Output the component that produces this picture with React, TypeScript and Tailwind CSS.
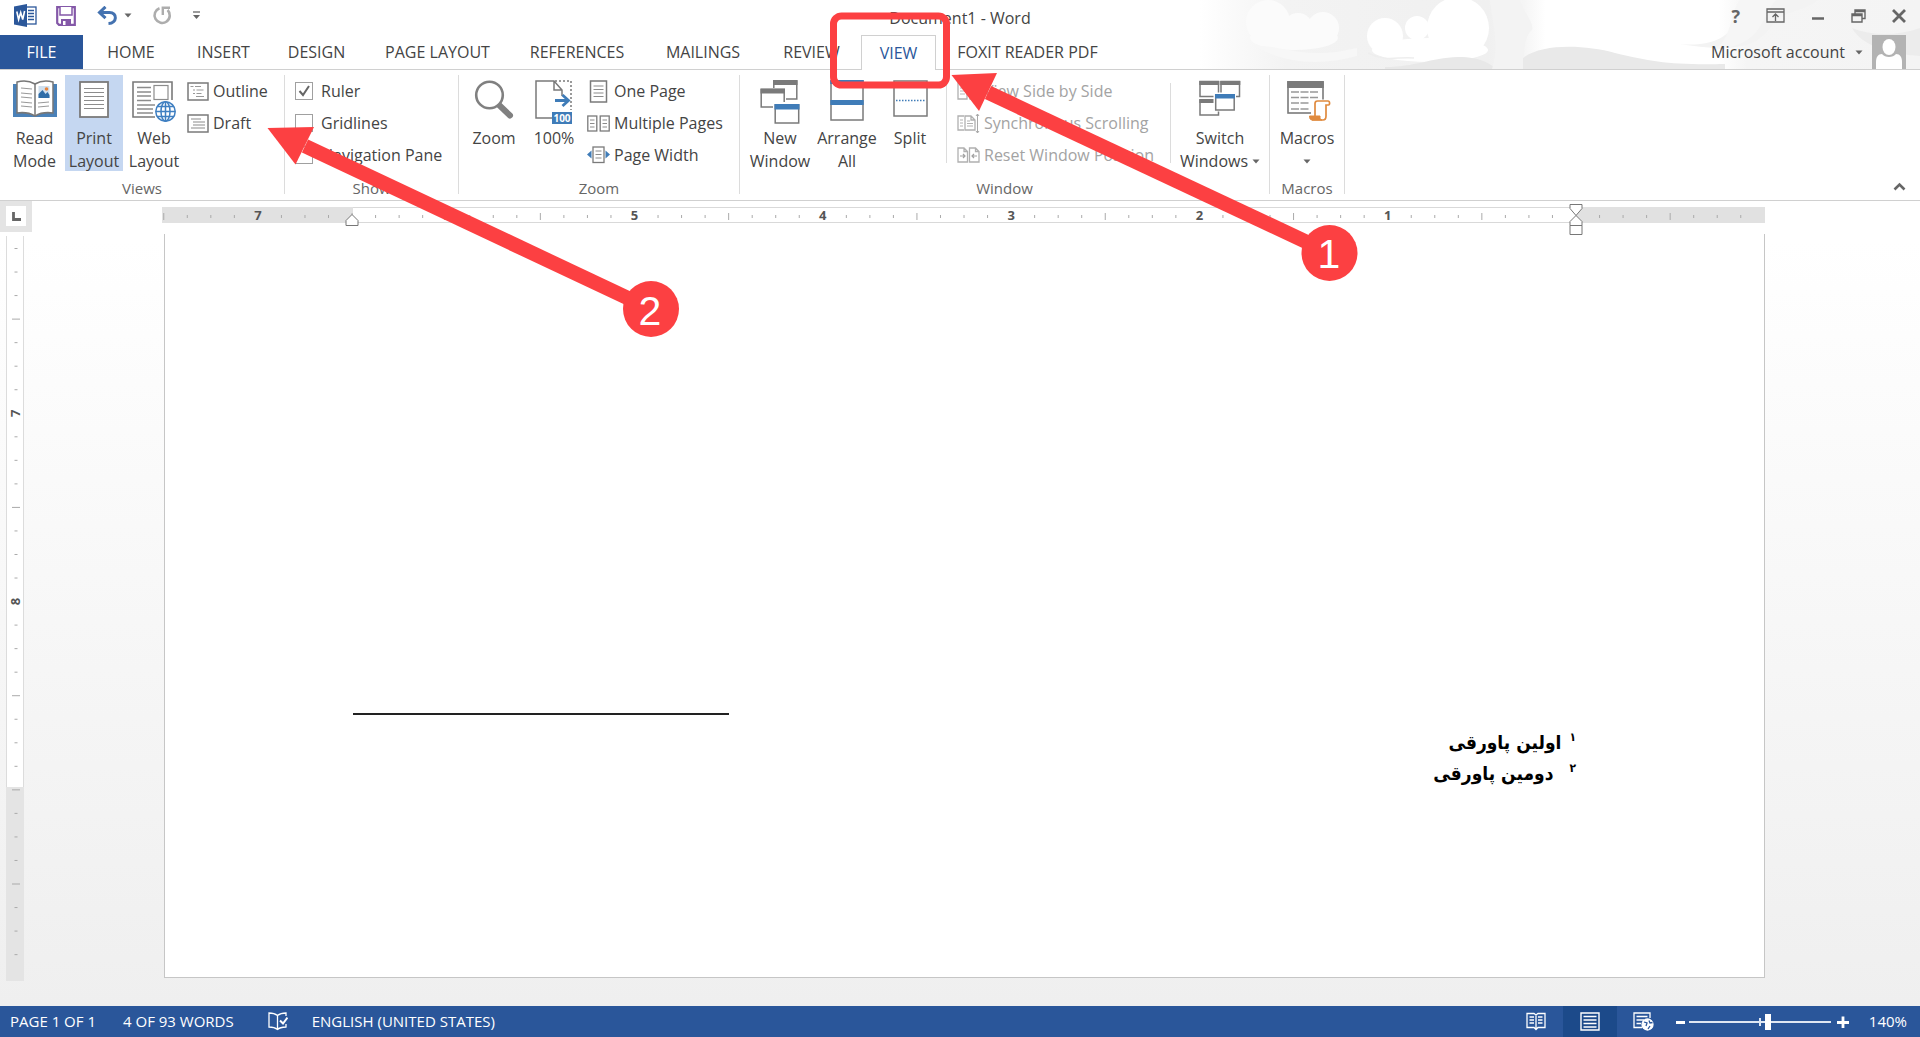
import React, { useState } from "react";
import { clsx } from "clsx";

const tabs = [
  { name: "HOME", width: "w-[96px]" },
  { name: "INSERT", width: "w-[89px]" },
  { name: "DESIGN", width: "w-[97px]" },
  { name: "PAGE LAYOUT", width: "w-[145px]" },
  { name: "REFERENCES", width: "w-[134px]" },
  { name: "MAILINGS", width: "w-[118px]" },
  { name: "REVIEW", width: "w-[99px]" },
  { name: "VIEW", width: "w-[75px]" },
  { name: "FOXIT READER PDF", width: "w-[183px]" },
];

const Caret: React.FC<{ className?: string }> = ({ className }) => (
  <svg width="8" height="5" viewBox="0 0 8 5" className={className}>
    <path d="M0.5 0.5h7L4 4.5z" fill="#666" />
  </svg>
);

/* ---------- title bar icons ---------- */

const WordLogo = () => (
  <svg width="23" height="23" viewBox="0 0 23 23">
    <rect x="11.500" y="3" width="10.500" height="17" fill="#fff" stroke="#2b579a" strokeWidth="1.300" />
    <path d="M14 6.500h6M14 9.500h6M14 12.500h6M14 15.500h6" stroke="#2b579a" strokeWidth="1.400" />
    <path d="M0 2.500 13 0v23L0 20.500z" fill="#2b579a" />
    <path d="M2.800 7.500 4.600 15.500 6.700 8.500 8.700 15.500 10.600 7" fill="none" stroke="#fff" strokeWidth="1.600" />
  </svg>
);

const SaveIcon = () => (
  <svg width="20" height="20" viewBox="0 0 20 20">
    <path d="M1.200 1.200h17.600v17.600H3L1.200 17z" fill="#fff" stroke="#8458a8" strokeWidth="2.200" />
    <path d="M4 1v8h12V1" fill="#fff" stroke="#8458a8" strokeWidth="1.500" />
    <path d="M5 19v-6h10v6z" fill="#8458a8" />
    <rect x="7" y="15" width="2.500" height="4" fill="#fff" />
  </svg>
);

const UndoIcon = () => (
  <svg width="21" height="19" viewBox="0 0 21 19">
    <path d="M3 6.500h9.500c8 0 8 10.500-1 11" fill="none" stroke="#4472b0" strokeWidth="3" />
    <path d="M8.500 0.800 2.500 6.500l6 5.700" fill="none" stroke="#4472b0" strokeWidth="3" />
  </svg>
);

const RedoIcon = () => (
  <svg width="20" height="19" viewBox="0 0 20 19">
    <path d="M7.500 2.200A7.600 7.600 0 1 0 15.600 4" fill="none" stroke="#adadad" strokeWidth="2.600" />
    <path d="M10.800 9V1.800H18" fill="none" stroke="#adadad" strokeWidth="2.400" />
  </svg>
);

const CustomizeIcon = () => (
  <svg width="9" height="9" viewBox="0 0 9 9">
    <path d="M1 1h7" stroke="#666" strokeWidth="1.300" />
    <path d="M1 4h7L4.500 8z" fill="#666" />
  </svg>
);

/* ---------- large ribbon icons ---------- */

const ReadModeIcon = () => (
  <svg width="44" height="38" viewBox="0 0 44 38">
    <path d="M0 4h44v33H0z" fill="#4a81b8" />
    <path d="M4 2c7-2 13-1 18 2 5-3 11-4 18-2v31c-7-1-13 0-18 3-5-3-11-4-18-3z" fill="#fff" stroke="#777" strokeWidth="1.500" />
    <path d="M22 4v31" stroke="#777" strokeWidth="1.500" />
    <path d="M8 8l11 1M8 13l11 1M8 17l11 1M8 22l11 1M8 26l11 1M25 23l11-1M25 27l11-1" stroke="#999" strokeWidth="1.200" />
    <rect x="25.500" y="6" width="11" height="12" fill="#cfdfee" />
    <path d="M25.500 18v-4l4-4 3 4 2-2 2 3v3z" fill="#2f6da8" />
    <circle cx="33.500" cy="9" r="1.800" fill="#e8833a" />
  </svg>
);

const PrintLayoutIcon = () => (
  <svg width="30" height="38" viewBox="0 0 30 38">
    <rect x="1" y="2" width="28" height="35" fill="#fff" stroke="#7a7a7a" strokeWidth="1.800" />
    <path d="M5 8.500h20M5 12.500h20M5 16.500h20M5 20.500h20M5 24.500h20M5 28.500h20" stroke="#8c8c8c" strokeWidth="1.200" />
  </svg>
);

const WebLayoutIcon = () => (
  <svg width="44" height="42" viewBox="0 0 44 42">
    <path d="M23 37H1V2h39v18" fill="#fff" stroke="#7a7a7a" strokeWidth="1.600" />
    <path d="M5 7.500h14M5 12h14M5 16h14M5 20.500h14M5 25h18M5 29h16M5 33h16" stroke="#8c8c8c" strokeWidth="1.300" />
    <rect x="22" y="5.500" width="14" height="14" fill="#fff" stroke="#8c8c8c" strokeWidth="1.200" />
    <g fill="#fff" stroke="#3f7fc1" strokeWidth="1.500">
      <circle cx="33.500" cy="31.500" r="9.700" />
      <ellipse cx="33.500" cy="31.500" rx="4.500" ry="9.700" />
      <path d="M33.500 22v19M24 31.500h19M25.500 26.500h16M25.500 36.500h16" />
    </g>
  </svg>
);

const MagnifierIcon = () => (
  <svg width="40" height="40" viewBox="0 0 40 40">
    <path d="M24 24 36 35.500" stroke="#808080" strokeWidth="6" strokeLinecap="round" />
    <circle cx="15.500" cy="15" r="13.300" fill="#fff" stroke="#808080" strokeWidth="2.600" />
  </svg>
);

const HundredIcon = () => (
  <svg width="38" height="44" viewBox="0 0 38 44">
    <path d="M17 38H1V1h18l8 9v6M19 1v9h8" fill="none" stroke="#7a7a7a" strokeWidth="1.500" />
    <path d="M20 1h16v29" fill="none" stroke="#7a7a7a" strokeWidth="1.500" strokeDasharray="2 2" />
    <path d="M20 20.500h13M27.500 15l6 5.500-6 5.500" fill="none" stroke="#3f7cb8" strokeWidth="2.800" />
    <rect x="17" y="32" width="20" height="12" fill="#3f7cb8" />
    <text x="27" y="42" textAnchor="middle" fontSize="10" fontWeight="700" fill="#fff">
      100
    </text>
  </svg>
);

const NewWindowIcon = () => (
  <svg width="40" height="44" viewBox="0 0 40 44">
    <rect x="13.800" y="1" width="23" height="18" fill="#fff" stroke="#7a7a7a" strokeWidth="1.500" />
    <path d="M13 0h24.500v5H13z" fill="#7a7a7a" />
    <path d="M0 8h26v20H0z" fill="#fff" />
    <rect x="1.200" y="9.500" width="23" height="17.500" fill="#fff" stroke="#7a7a7a" strokeWidth="1.500" />
    <path d="M0.500 8.500H25v5H0.500z" fill="#7a7a7a" />
    <path d="M13 22h27v22H13z" fill="#fff" />
    <rect x="15.200" y="25" width="23.500" height="18" fill="#fff" stroke="#7a7a7a" strokeWidth="1.500" />
    <path d="M14.500 24h25v5.500h-25z" fill="#3f7cb8" />
  </svg>
);

const ArrangeAllIcon = () => (
  <svg width="34" height="42" viewBox="0 0 34 42">
    <rect x="1" y="1" width="32" height="39" fill="#fff" stroke="#7a7a7a" strokeWidth="1.500" />
    <path d="M0.300 0h33.400v4H0.300zM0.300 20h33.400v5H0.300z" fill="#3f7cb8" />
  </svg>
);

const SplitIcon = () => (
  <svg width="35" height="38" viewBox="0 0 35 38">
    <rect x="1" y="1" width="33" height="35" fill="#fff" stroke="#7a7a7a" strokeWidth="1.500" />
    <path d="M3 20.500h30" stroke="#3f7cb8" strokeWidth="1.500" strokeDasharray="1.500 1.500" />
  </svg>
);

const SwitchWindowsIcon = () => (
  <svg width="42" height="38" viewBox="0 0 42 38">
    <g fill="#fff" stroke="#7a7a7a" strokeWidth="1.500">
      <rect x="1" y="1.500" width="18.500" height="15" />
      <rect x="22" y="1.500" width="18.500" height="15" />
      <rect x="1" y="20" width="18.500" height="15" />
    </g>
    <path d="M0.300 1h20v4h-20zM21.300 1h20v4h-20zM0.300 19h20v4h-20z" fill="#7a7a7a" />
    <path d="M14.500 12.500h22.500v19H14.500z" fill="#fff" />
    <rect x="16.700" y="15" width="18.500" height="15" fill="#fff" stroke="#7a7a7a" strokeWidth="1.500" />
    <path d="M16 14h20v4.500H16z" fill="#3f7cb8" />
  </svg>
);

const MacrosIcon = () => (
  <svg width="50" height="42" viewBox="0 0 50 42">
    <rect x="6" y="2" width="35" height="31" fill="#fff" stroke="#7a7a7a" strokeWidth="1.600" />
    <path d="M5.200 1h36.600v7H5.200z" fill="#7a7a7a" />
    <path d="M9 12h28M9 17.500h28M9 23h19M9 29h19" stroke="#999" strokeWidth="1.700" strokeDasharray="8 1.500" />
    <path d="M29 19.500h20V40H29z" fill="#fff" />
    <path d="M33 36V23.500c0-2 1-2.500 2.500-2.500H46c2 0 2 4 .5 4H44v11c0 3-1 4-3 4H30" fill="#fff" stroke="#e08a3e" strokeWidth="1.700" />
    <path d="M27.500 36H38c0 2 0 4 2 4H30c-2 0-2.500-2-2.500-4z" fill="#e08a3e" stroke="#e08a3e" />
  </svg>
);

/* ---------- small ribbon icons ---------- */

const OutlineIcon = () => (
  <svg width="22" height="19" viewBox="0 0 22 19">
    <rect x="1" y="1" width="20" height="17" fill="#fff" stroke="#7a7a7a" strokeWidth="1.500" />
    <path d="M3.500 4.500h3M8 4.500h6M6 8h2M9.500 8h7M6 11.500h2M9.500 11.500h5M9 14.500h8" stroke="#999" strokeWidth="1.200" />
  </svg>
);

const DraftIcon = () => (
  <svg width="22" height="19" viewBox="0 0 22 19">
    <rect x="1" y="1" width="20" height="17" fill="#fff" stroke="#7a7a7a" strokeWidth="1.500" />
    <path d="M4 5h10M6 8h12M6 11h12M4 14h14" stroke="#8c8c8c" strokeWidth="1.200" />
  </svg>
);

const OnePageIcon = () => (
  <svg width="23" height="23" viewBox="0 0 23 23">
    <rect x="3.500" y="1" width="16" height="21" fill="#fff" stroke="#7a7a7a" strokeWidth="1.500" />
    <path d="M6.500 6h10M6.500 9.500h10M6.500 13h10M6.500 16.500h10" stroke="#8c8c8c" strokeWidth="1.200" />
  </svg>
);

const MultiplePagesIcon = () => (
  <svg width="23" height="17" viewBox="0 0 23 17">
    <g fill="#fff" stroke="#7a7a7a" strokeWidth="1.300">
      <rect x="0.800" y="1" width="9" height="15" />
      <rect x="13.200" y="1" width="9" height="15" />
    </g>
    <path d="M3 5h4.500M3 8.500h4.500M3 12h4.500M15.500 5H20M15.500 8.500H20M15.500 12H20" stroke="#8c8c8c" />
  </svg>
);

const PageWidthIcon = () => (
  <svg width="23" height="18" viewBox="0 0 23 18">
    <rect x="6" y="1" width="11" height="15.500" fill="#fff" stroke="#7a7a7a" strokeWidth="1.300" />
    <path d="M8.500 5h6M8.500 8.500h6M8.500 12h6" stroke="#8c8c8c" />
    <path d="M4.500 4.500v8L0 8.500zM18.500 4.500v8l4.500-4z" fill="#3f7cb8" />
  </svg>
);

const SideBySideIcon = () => (
  <svg width="23" height="18" viewBox="0 0 23 18">
    <path d="M1 1h9v16H1zM13 1h9v16h-9z" fill="none" stroke="#b0b0b0" strokeWidth="1.300" />
    <path d="M3 6h5M3 9h5M3 12h5M15 6h5M15 9h5M15 12h5" stroke="#b8b8b8" />
  </svg>
);

const SyncScrollIcon = () => (
  <svg width="23" height="21" viewBox="0 0 23 21">
    <path d="M7 17H1V3h6M8 3h6l4 4v10H8zM14 3v4h4" fill="none" stroke="#b0b0b0" strokeWidth="1.300" />
    <path d="M3 7h3M3 10h3M3 13h3M10 8h3M10 10.500h6M10 13h6" stroke="#b0b0b0" />
    <path d="M20.500 1v19M19 3l1.500-2L22 3M19 18l1.500 2 1.500-2" fill="none" stroke="#a8a8a8" />
  </svg>
);

const ResetPositionIcon = () => (
  <svg width="23" height="17" viewBox="0 0 23 17">
    <path d="M1 1h6l3.500 3.500V15H1zM7 1v3.500h3.500M12.500 1h6L22 4.500V15h-9.500zM18.500 1v3.500H22" fill="none" stroke="#b0b0b0" strokeWidth="1.300" />
    <path d="M3 9h5M6 7l2 2-2 2M20 9h-5M17 7l-2 2 2 2" fill="none" stroke="#a0a0a0" strokeWidth="1.200" />
  </svg>
);

/* ---------- ribbon building blocks ---------- */

const RibbonGroup: React.FC<{ label: string; children: React.ReactNode }> = ({ label, children }) => (
  <section className="flex pt-[5px]" aria-label={label}>
    <div className="flex flex-col">
      <div className="flex h-24">{children}</div>
      <div className="mt-[5px] h-6 text-center text-[15px] leading-6 text-[#666]">{label}</div>
    </div>
    <div className="h-[119px] w-px bg-[#dcdcdc]" />
  </section>
);

interface LargeButtonProps {
  icon: React.ReactNode;
  lines: string[];
  width: string;
  active?: boolean;
  caret?: boolean;
}

const LargeButton: React.FC<LargeButtonProps> = ({ icon, lines, width, active, caret }) => (
  <button className={clsx("flex flex-col items-center whitespace-nowrap pt-[5px]", width, active && "bg-[#c5d7f1]")}>
    <span className="flex h-[47px] shrink-0 items-start">{icon}</span>
    {lines.map((line, i) => (
      <span key={line} className="flex h-[23px] shrink-0 items-center gap-1 leading-[23px]">
        {line}
        {caret && i === lines.length - 1 && lines.length > 1 && <Caret />}
      </span>
    ))}
    {caret && lines.length === 1 && (
      <span className="flex h-[23px] shrink-0 items-center">
        <Caret />
      </span>
    )}
  </button>
);

const SmallButton: React.FC<{ icon: React.ReactNode; label: string; disabled?: boolean }> = ({ icon, label, disabled }) => (
  <button disabled={disabled} className={clsx("flex h-8 items-center gap-1 whitespace-nowrap", disabled && "text-[#a3a3a3]")}>
    {icon}
    {label}
  </button>
);

const CheckRow: React.FC<{ label: string; initial?: boolean }> = ({ label, initial = false }) => {
  const [checked, setChecked] = useState(initial);
  return (
    <label className="flex h-8 items-center gap-2 whitespace-nowrap">
      <span className="grid">
        <input
          type="checkbox"
          checked={checked}
          onChange={() => setChecked(!checked)}
          className="col-start-1 row-start-1 size-[18px] appearance-none border border-[#a0a0a0] bg-white"
        />
        {checked && (
          <svg viewBox="0 0 18 18" className="pointer-events-none col-start-1 row-start-1 size-[18px]">
            <path d="M4.500 9 8 13l6-9" fill="none" stroke="#666" strokeWidth="2" />
          </svg>
        )}
      </span>
      {label}
    </label>
  );
};

const Divider = () => <div className="mt-2 h-20 w-px bg-[#dcdcdc]" />;

/* ---------- header ---------- */

const HeaderArt = () => (
  <svg className="pointer-events-none absolute right-0 top-0" width="720" height="69" viewBox="0 0 720 69" aria-hidden="true">
    <defs>
      <linearGradient id="sky" x1="0" x2="1" y1="0" y2="0">
        <stop offset="0" stopColor="#f2f2f2" stopOpacity="0" />
        <stop offset="0.120" stopColor="#f3f3f3" />
        <stop offset="0.400" stopColor="#f0f0f0" />
        <stop offset="0.450" stopColor="#f5f5f5" />
        <stop offset="0.480" stopColor="#ffffff" />
        <stop offset="0.720" stopColor="#ffffff" />
        <stop offset="0.760" stopColor="#f5f5f5" />
        <stop offset="1" stopColor="#f4f4f4" />
      </linearGradient>
    </defs>
    <rect width="720" height="69" fill="url(#sky)" />
    <g fill="#fbfbfb">
      <circle cx="68" cy="22" r="22" />
      <circle cx="98" cy="28" r="15" />
      <circle cx="123" cy="28" r="16" />
      <ellipse cx="94" cy="38" rx="44" ry="12" />
    </g>
    <path d="M55 46c20-1 35 7 62 7 16 0 26-2 40-5v8c-36 10-72 8-102-10z" fill="#f7f7f7" />
    <g fill="#fff">
      <circle cx="185" cy="36" r="18" />
      <circle cx="217" cy="28" r="12" />
      <circle cx="258" cy="28" r="31" />
      <ellipse cx="230" cy="50" rx="58" ry="12" />
    </g>
    <path d="M168 53c20 10 30 3 46 5" fill="none" stroke="#eee" strokeWidth="1.500" />
    <path d="M185 67c30 0 45-9 73-10 25 0 30 7 40 12H185z" fill="#e8e8e8" />
    <path d="M290 0h30c5 15 14 22 12 30-8 6-9 26-8 39h-32c8-24 0-48-2-69z" fill="#f3f3f3" />
    <path d="M323 58c20-15 62-13 92-5 38 9 55 12 110 11v5H323z" fill="#e9e9e9" />
    <path d="M475 43c25 5 52-2 58-18L548 0h70c-22 16-34 8-48 28-14 20-40 25-95 15z" fill="#f3f3f3" />
    <path d="M540 0h36c-18 22-12 44-62 50 20-14 14-34 26-50z" fill="#f6f6f6" />
    <path d="M652 28c20 8 45 8 68 0v28c-30-2-58-10-68-28z" fill="#ececec" />
  </svg>
);

const Header: React.FC<{ current: string; onSelect: (tab: string) => void }> = ({ current, onSelect }) => (
  <header className="relative bg-white">
    <HeaderArt />
    <div className="relative flex h-[35px] items-center">
      <div className="flex flex-1 items-center pb-1 pl-3.5">
        <WordLogo />
        <button className="ml-[19px]" aria-label="Save"><SaveIcon /></button>
        <button className="ml-[21px]" aria-label="Undo"><UndoIcon /></button>
        <button className="ml-1.5" aria-label="Undo history"><Caret /></button>
        <button className="ml-5" aria-label="Repeat"><RedoIcon /></button>
        <button className="ml-5" aria-label="Customize Quick Access Toolbar"><CustomizeIcon /></button>
      </div>
      <h1 className="leading-9">Document1 - Word</h1>
      <div className="flex flex-1 items-center justify-end gap-[26px] pb-1 pr-[14px]">
        <button className="text-lg font-bold leading-5 text-[#666]" aria-label="Help">?</button>
        <button aria-label="Ribbon Display Options">
          <svg width="19" height="15" viewBox="0 0 19 15" fill="none" stroke="#666" strokeWidth="1.300">
            <path d="M1 1h17v13H1zM1 4h17M9.500 13V6.500M6.500 9l3-3 3 3" />
          </svg>
        </button>
        <button aria-label="Minimize">
          <svg width="14" height="14" viewBox="0 0 14 14"><path d="M1 9.500h12" stroke="#666" strokeWidth="2.500" /></svg>
        </button>
        <button aria-label="Restore Down">
          <svg width="15" height="14" viewBox="0 0 15 14" fill="none" stroke="#666" strokeWidth="1.400">
            <path d="M1 5h10v8H1zM1 6.500h10M4 5V1h10v8.500h-3M4 2.500h10" />
          </svg>
        </button>
        <button aria-label="Close">
          <svg width="14" height="14" viewBox="0 0 14 14"><path d="M1 1l12 12M13 1 1 13" stroke="#666" strokeWidth="2.800" /></svg>
        </button>
      </div>
    </div>
    <nav className="relative flex h-[35px] border-b border-[#d0d0d0]">
      <button className="w-[83px] bg-[#2a569a] text-white">FILE</button>
      {tabs.map((tab) => (
        <button
          key={tab.name}
          onClick={() => onSelect(tab.name)}
          className={clsx(
            "whitespace-nowrap",
            tab.name === current ? "-mb-px border border-b-0 border-[#d0d0d0] bg-white text-[#2a569a]" : "h-[34px]",
            tab.width
          )}
        >
          {tab.name}
        </button>
      ))}
      <button className="ml-auto mr-[9px] flex items-center gap-2.5">
        Microsoft account
        <Caret />
      </button>
      <svg width="34" height="34" viewBox="0 0 34 34" className="mr-3.5" role="img" aria-label="Account picture">
        <path d="M0 0h34v34H0z" fill="#b3b3b3" />
        <ellipse cx="17" cy="12" rx="6.500" ry="8" fill="#fff" />
        <path d="M4 34v-7c0-5 2-8 6-8 3 4 11 4 14 0 4 0 6 3 6 8v7z" fill="#fff" />
      </svg>
    </nav>
  </header>
);

/* ---------- ribbon ---------- */

const Ribbon = () => (
  <div className="flex h-[131px] border-b border-[#d0d0d0] bg-white">
    <RibbonGroup label="Views">
      <LargeButton icon={<ReadModeIcon />} lines={["Read", "Mode"]} width="ml-1 w-[61px]" />
      <LargeButton icon={<PrintLayoutIcon />} lines={["Print", "Layout"]} width="w-[58px]" active />
      <LargeButton icon={<WebLayoutIcon />} lines={["Web", "Layout"]} width="w-[62px]" />
      <div className="mr-3.5 flex w-[85px] flex-col pl-0.5">
        <SmallButton icon={<OutlineIcon />} label="Outline" />
        <SmallButton icon={<DraftIcon />} label="Draft" />
      </div>
    </RibbonGroup>
    <RibbonGroup label="Show">
      <div className="flex w-[173px] flex-col pl-2.5">
        <CheckRow label="Ruler" initial />
        <CheckRow label="Gridlines" />
        <CheckRow label="Navigation Pane" />
      </div>
    </RibbonGroup>
    <RibbonGroup label="Zoom">
      <LargeButton icon={<MagnifierIcon />} lines={["Zoom"]} width="w-[70px]" />
      <LargeButton icon={<HundredIcon />} lines={["100%"]} width="w-[50px]" />
      <div className="flex w-[160px] flex-col pl-2">
        <SmallButton icon={<OnePageIcon />} label="One Page" />
        <SmallButton icon={<MultiplePagesIcon />} label="Multiple Pages" />
        <SmallButton icon={<PageWidthIcon />} label="Page Width" />
      </div>
    </RibbonGroup>
    <RibbonGroup label="Window">
      <LargeButton icon={<NewWindowIcon />} lines={["New", "Window"]} width="ml-1.5 w-[68px]" />
      <LargeButton icon={<ArrangeAllIcon />} lines={["Arrange", "All"]} width="w-[66px]" />
      <LargeButton icon={<SplitIcon />} lines={["Split"]} width="w-[60px] mr-1.5" />
      <Divider />
      <div className="flex w-[223px] flex-col pl-2.5">
        <SmallButton icon={<SideBySideIcon />} label="View Side by Side" disabled />
        <SmallButton icon={<SyncScrollIcon />} label="Synchronous Scrolling" disabled />
        <SmallButton icon={<ResetPositionIcon />} label="Reset Window Position" disabled />
      </div>
      <Divider />
      <LargeButton icon={<SwitchWindowsIcon />} lines={["Switch", "Windows"]} width="w-[98px]" caret />
    </RibbonGroup>
    <RibbonGroup label="Macros">
      <LargeButton icon={<MacrosIcon />} lines={["Macros"]} width="w-[74px]" caret />
    </RibbonGroup>
    <button className="mb-1 ml-auto mr-[14px] self-end" aria-label="Collapse the Ribbon">
      <svg width="13" height="16" viewBox="0 0 13 16">
        <path d="M1.500 9.500l5-5 5 5" fill="none" stroke="#666" strokeWidth="2.600" />
      </svg>
    </button>
  </div>
);

/* ---------- rulers, one inch is 188 px at 140% ---------- */

const INCH = 188.3;

const HorizontalRuler = () => {
  const zero = 1414;
  const ticks = Array.from({ length: 68 }, (_, i) => i - 7);
  return (
    <svg width="1604" height="30" viewBox="0 0 1604 30" className="overflow-visible" aria-label="Horizontal ruler">
      <path d="M0 6h1603v16H0z" fill="#fff" />
      <path d="M190 6.500h1224M190 21.500h1224" stroke="#d9d9d9" />
      <path d="M0 6h191v16H0zM1414 6h189v16h-189z" fill="#e1e1e1" />
      {ticks.map((t) => {
        const x = zero - (t * INCH) / 8;
        if (t === 0 || x < 0) return null;
        if (t > 0 && t % 8 === 0) {
          return (
            <text key={t} x={x} y="19" textAnchor="middle" fontSize="13" fontWeight="700" fill="#555">
              {t / 8}
            </text>
          );
        }
        const half = t % 4 === 0 ? 3.500 : 1.500;
        return <path key={t} d={`M${x} ${15.500 - half}v${half * 2}`} stroke="#aaa" />;
      })}
      <path d="M184 24.500v-5l6-6 6 6v5z" fill="#fff" stroke="#777" />
      <path d="M1408 3.500h12v4l-6 7-6-7zM1408 24.500v-4l6-6 6 6v4zM1408 24.500h12v9h-12z" fill="#fff" stroke="#777" />
    </svg>
  );
};

const VerticalRuler = () => {
  const ticks = Array.from({ length: 31 }, (_, i) => i);
  return (
    <svg width="18" height="745" viewBox="0 0 18 745" className="ml-1.5" aria-label="Vertical ruler">
      <path d="M0 0h18v551H0z" fill="#fff" />
      <path d="M0.500 0v551M17.500 0v551" stroke="#dcdcdc" />
      <path d="M0 551h18v194H0z" fill="#e4e4e4" />
      {ticks.map((t) => {
        const y = 12.500 + (t * INCH) / 8;
        if (t === 7 || t === 15) {
          return (
            <text key={t} x="0" y="0" transform={`translate(14 ${y}) rotate(-90)`} textAnchor="middle" fontSize="13" fontWeight="700" fill="#555">
              {t === 7 ? 7 : 8}
            </text>
          );
        }
        const half = t % 4 === 3 ? 4 : 1.500;
        return <path key={t} d={`M${10 - half} ${y}h${half * 2}`} stroke="#aaa" />;
      })}
    </svg>
  );
};

const Footnote: React.FC<{ mark: string; text: string; gap: string }> = ({ mark, text, gap }) => (
  <p className={clsx("flex h-[31px] items-center text-[19px] font-bold leading-[31px] text-black", gap)}>
    <sup className="text-xs">{mark}</sup>
    <span>{text}</span>
  </p>
);

const Workspace = () => (
  <main className="flex min-h-0 flex-1 flex-col bg-linear-to-b from-white from-5% to-[#efefef]">
    <div className="flex h-[33px] shrink-0">
      <div className="mb-0.5 w-8 bg-[#e4e4e4] px-1.5 py-[5px]">
        <button className="flex h-5 w-5 items-center justify-center bg-white" aria-label="Tab selector">
          <svg width="9" height="9" viewBox="0 0 9 9"><path d="M1.500 0v7.500H9" fill="none" stroke="#666" strokeWidth="2.800" /></svg>
        </button>
      </div>
      <div className="flex flex-1 justify-center pr-[25px]">
        <div className="relative z-10"><HorizontalRuler /></div>
      </div>
    </div>
    <div className="flex min-h-0 flex-1">
      <div className="w-8 shrink-0 overflow-hidden pt-0.5"><VerticalRuler /></div>
      <div className="flex flex-1 justify-center pb-7 pr-[23px]">
        <article className="flex w-[1601px] flex-col justify-end border border-t-0 border-[#c6c6c6] bg-white px-[188px] pb-[188px]">
          <hr className="mb-3 w-[376px] border-t-2 border-[#222]" />
          <div dir="rtl" lang="fa" className="font-['DejaVu_Sans_Condensed','DejaVu_Sans',sans-serif]">
            <Footnote mark="۱" text="اولین پاورقی" gap="gap-2" />
            <Footnote mark="۲" text="دومین پاورقی" gap="gap-4" />
          </div>
        </article>
      </div>
    </div>
  </main>
);

/* ---------- status bar ---------- */

const StatusBar = () => {
  const [zoom, setZoom] = useState(56);
  return (
    <footer className="flex h-[31px] shrink-0 items-center bg-[#2a569a] text-[15px] text-white">
      <button className="pl-2.5">PAGE 1 OF 1</button>
      <button className="ml-[27px]">4 OF 93 WORDS</button>
      <button className="ml-[34px]" aria-label="Proofing">
        <svg width="20" height="19" viewBox="0 0 20 19" fill="none" stroke="#fff" strokeWidth="1.300">
          <path d="M9.500 17.500V3.500C7 1.500 4 1 1 1v14c3 0 6 .5 8.500 2.500 1.500-1.500 4-2.300 8.500-2.500v-3M9.500 3.500C12 1.500 14 1 18 1v3" />
          <path d="M12 8.500l3 3 4.500-6" strokeWidth="2" />
        </svg>
      </button>
      <button className="ml-6">ENGLISH (UNITED STATES)</button>
      <div className="ml-auto flex h-full items-center">
        <button className="flex h-full w-[36px] items-center justify-center" aria-label="Read Mode">
          <svg width="20" height="19" viewBox="0 0 20 19" fill="none" stroke="#fff" strokeWidth="1.300">
            <path d="M1 1.500h7l2 1.500 2-1.500h7v14h-7l-2 2-2-2H1zM10 3v14M3.500 5H8M3.500 8H8M3.500 11H8M12 5h4.500M12 8h4.500M12 11h4.500" />
          </svg>
        </button>
        <button className="ml-[9px] flex h-full w-[54px] items-center justify-center bg-[#1c4a8a]" aria-label="Print Layout">
          <svg width="20" height="19" viewBox="0 0 20 19" fill="none" stroke="#fff" strokeWidth="1.400">
            <path d="M1 1h18v17H1zM3.500 4.500h13M3.500 8h13M3.500 11.500h13M3.500 15h13" />
          </svg>
        </button>
        <button className="ml-4 mr-[22px]" aria-label="Web Layout">
          <svg width="21" height="19" viewBox="0 0 21 19" fill="none" stroke="#fff" strokeWidth="1.300">
            <path d="M9 15.500H1V1h16v5M3.500 4.500h11M3.500 8H11M3.500 11.500H8" />
            <circle cx="14.500" cy="12.500" r="5.500" fill="#fff" />
            <path d="M11 10l3 1-1 3M16 8.500l1 2.500 2.500-.5M15 17l2-3" stroke="#2a569a" />
          </svg>
        </button>
        <button aria-label="Zoom Out">
          <svg width="9" height="12" viewBox="0 0 9 12"><path d="M0 6.500h9" stroke="#fff" strokeWidth="3" /></svg>
        </button>
        <div className="ml-1 grid items-center">
          <input
            type="range"
            aria-label="Zoom level"
            value={zoom}
            onChange={(e) => setZoom(Number(e.target.value))}
            className="col-start-1 row-start-1 h-4 w-[142px] appearance-none bg-transparent [&::-webkit-slider-runnable-track]:h-4 [&::-webkit-slider-runnable-track]:bg-[linear-gradient(transparent_7px,#dfe7f3_7px,#dfe7f3_9px,transparent_9px)] [&::-webkit-slider-thumb]:h-4 [&::-webkit-slider-thumb]:w-1.5 [&::-webkit-slider-thumb]:appearance-none [&::-webkit-slider-thumb]:bg-white"
          />
          <div className="pointer-events-none col-start-1 row-start-1 h-2 w-0.5 justify-self-center bg-[#dfe7f3]" />
        </div>
        <button className="ml-1.5" aria-label="Zoom In">
          <svg width="12" height="12" viewBox="0 0 12 12"><path d="M0 6.500h12M6 0.500v12" stroke="#fff" strokeWidth="2.800" /></svg>
        </button>
        <button className="w-[71px] pr-[13px] text-right">140%</button>
      </div>
    </footer>
  );
};

/* ---------- red markers for the two steps ---------- */

const StepMarkers = () => (
  <svg className="pointer-events-none absolute left-0 top-0 z-20 font-['Liberation_Sans',sans-serif]" width="1400" height="360" viewBox="0 0 1400 360" fill="#fc4042">
    <rect x="833.500" y="16" width="113" height="69" rx="8" fill="none" stroke="#fc4042" strokeWidth="7" />
    <path d="M951.500 75 997 73 979 111z" />
    <path d="M988 92.500 1330 253" stroke="#fc4042" strokeWidth="14.500" />
    <circle cx="1329.500" cy="253" r="28" />
    <path d="M267.500 128 314 127 295.500 164.500z" />
    <path d="M305 146 651 309" stroke="#fc4042" strokeWidth="14.500" />
    <circle cx="651" cy="309" r="28" />
    <g fill="#fff" fontSize="41" textAnchor="middle">
      <text x="1329" y="268">1</text>
      <text x="650" y="325">2</text>
    </g>
  </svg>
);

const App: React.FC = () => {
  const [tab, setTab] = useState("VIEW");

  return (
    <div className="relative flex h-screen flex-col overflow-hidden font-['Open_Sans','Noto_Sans',sans-serif] text-base text-[#444]">
      <Header current={tab} onSelect={setTab} />
      <Ribbon />
      <Workspace />
      <StatusBar />
      <StepMarkers />
    </div>
  );
};

export default App;
